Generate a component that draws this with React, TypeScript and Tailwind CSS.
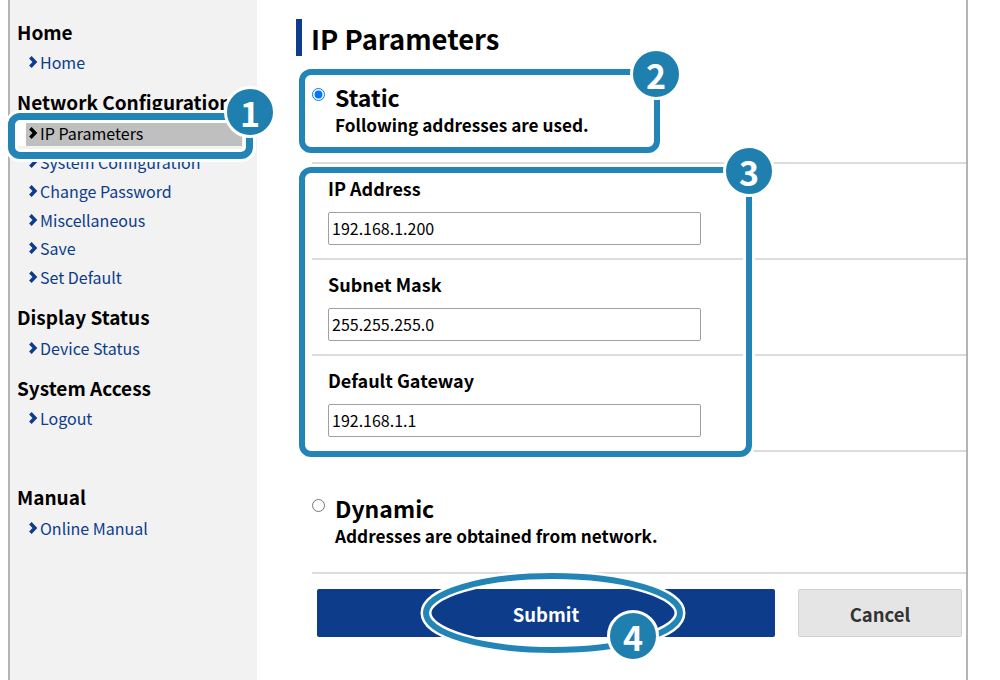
import React from 'react';

const FONT = 'font-["Noto_Sans_CJK_JP","Noto_Sans",sans-serif]';

const NAV = [
  { title: 'Home', top: 'pt-[18px]', list: 'mt-[2px]', links: ['Home'] },
  { title: 'Network Configuration', top: 'pt-[11px]', list: 'mt-[3px]', links: ['IP Parameters', 'System Configuration', 'Change Password', 'Miscellaneous', 'Save', 'Set Default'] },
  { title: 'Display Status', top: 'pt-[11px]', list: 'mt-[3px]', links: ['Device Status'] },
  { title: 'System Access', top: 'pt-[12px]', list: 'mt-[1px]', links: ['Logout'] },
  { title: 'Manual', top: 'pt-[51px]', list: 'mt-[2px]', links: ['Online Manual'] },
];

function Chevron({ active }: { active?: boolean }) {
  return (
    <svg viewBox="0 0 8 10" className={`w-[10px] h-[12px] shrink-0 ${active ? 'text-black' : 'text-[#0d3c8a]'}`}>
      <path d="M1.8 1 L5.6 5 L1.8 9" fill="none" stroke="currentColor" strokeWidth="2.9" />
    </svg>
  );
}

function Sidebar() {
  return (
    <aside className="w-[247px] shrink-0 bg-[#f2f2f2]">
      {NAV.map(group => (
        <div key={group.title} className={group.top}>
          <h2 className="pl-[7px] text-[19px] leading-[28px] font-bold text-black whitespace-nowrap">{group.title}</h2>
          <ul className={group.list}>
            {group.links.map(link => {
              const active = link === 'IP Parameters';
              return (
                <li key={link} className="h-[28.8px] flex items-center">
                  <div className={`ml-[16px] w-[216px] h-[25px] pl-[1.5px] flex items-center gap-[2.5px] ${active ? 'bg-[#bfbfbf] text-black shadow-[-11px_0_0_#ffffff]' : 'text-[#0d3c8a]'}`}>
                    <Chevron active={active} />
                    <span className="text-[16px] whitespace-nowrap">{link}</span>
                  </div>
                </li>
              );
            })}
          </ul>
        </div>
      ))}
    </aside>
  );
}

function AddressField({ label, value }: { label: string; value: string }) {
  return (
    <div className="ml-[16px] pl-[16px] pt-[10px] h-[96px] border-b-2 border-[#dcdcdc]">
      <label className="block text-[18px] leading-[28px] font-bold text-black">{label}</label>
      <input
        readOnly
        value={value}
        className="block mt-[10px] w-[373px] h-[33px] pl-[3px] pr-[4px] pb-[2px] bg-white border border-[#a0a0a0] rounded-[2px] text-[16px] text-black outline-none"
      />
    </div>
  );
}

function ModeOption({ title, text, checked, className }: { title: string; text: string; checked: boolean; className: string }) {
  return (
    <div className={`ml-[16px] flex border-b-2 border-[#dcdcdc] ${className}`}>
      <input type="radio" name="mode" readOnly checked={checked} className="w-[13px] h-[13px] m-0 mt-[8px] ml-0 shrink-0" />
      <div className="ml-[10px]">
        <div className="text-[23px] leading-[34px] font-bold text-black">{title}</div>
        <div className="text-[17.2px] leading-[22px] font-bold text-black whitespace-nowrap">{text}</div>
      </div>
    </div>
  );
}

function Badge({ n, className }: { n: number; className: string }) {
  return (
    <div className={`absolute w-[52px] h-[52px] rounded-full bg-[#1f7fae] border-[3px] border-white flex items-center justify-center text-white text-[34px] font-bold ${className}`}>
      {n}
    </div>
  );
}

const Frame = 'absolute border-[#2385b6] rounded-[12px] shadow-[0_0_0_3px_#ffffff,inset_0_0_0_3px_#ffffff]';

export default function App() {
  return (
    <div className={`relative w-[1000px] h-[680px] overflow-hidden bg-white ${FONT}`}>
      <div className="ml-[8px] w-[960px] h-[680px] flex border-x-2 border-[#b4b4b4]">
        <Sidebar />
        <main className="flex-1 min-w-0 pl-[39px] pt-[19px]">
          <h1 className="h-[37px] border-l-[6px] border-[#0d3c8a] pl-[9px] text-[27.4px] leading-[38px] font-bold text-black whitespace-nowrap">IP Parameters</h1>
          <ModeOption className="h-[84px] mt-[24px]" title="Static" text="Following addresses are used." checked />
          <AddressField label="IP Address" value="192.168.1.200" />
          <AddressField label="Subnet Mask" value="255.255.255.0" />
          <AddressField label="Default Gateway" value="192.168.1.1" />
          <ModeOption className="h-[122px] pt-[39px]" title="Dynamic" text="Addresses are obtained from network." checked={false} />
          <div className="flex mt-[15px] ml-[21px] gap-[23px]">
            <button type="button" className="w-[458px] h-[48px] pt-[3px] rounded-[2px] bg-[#0d3c8a] text-white text-[18.5px] font-bold">Submit</button>
            <button type="button" className="w-[164px] h-[48px] pt-[3px] rounded-[2px] bg-[#e5e5e5] border border-[#d0d0d0] text-[#333333] text-[18.5px] font-bold">Cancel</button>
          </div>
        </main>
      </div>

      {/* numbered callouts drawn over the page */}
      <div className={`${Frame} border-[7px] left-[8px] top-[113px] w-[245px] h-[46px]`} />
      <div className={`${Frame} border-[6.5px] left-[299px] top-[69px] w-[361px] h-[84px]`} />
      <div className={`${Frame} border-[6.5px] left-[299px] top-[167px] w-[453px] h-[290px]`} />
      <svg className="absolute left-[415px] top-[565px] w-[276px] h-[96px]" viewBox="0 0 276 96">
        <ellipse cx="138" cy="48" rx="127" ry="37" fill="none" stroke="#ffffff" strokeWidth="11" />
        <ellipse cx="138" cy="48" rx="127" ry="37" fill="none" stroke="#2385b6" strokeWidth="6" />
      </svg>
      <Badge n={1} className="left-[224px] top-[86px]" />
      <Badge n={2} className="left-[630px] top-[48px]" />
      <Badge n={3} className="left-[723px] top-[145px]" />
      <Badge n={4} className="left-[607px] top-[610px]" />
    </div>
  );
}
